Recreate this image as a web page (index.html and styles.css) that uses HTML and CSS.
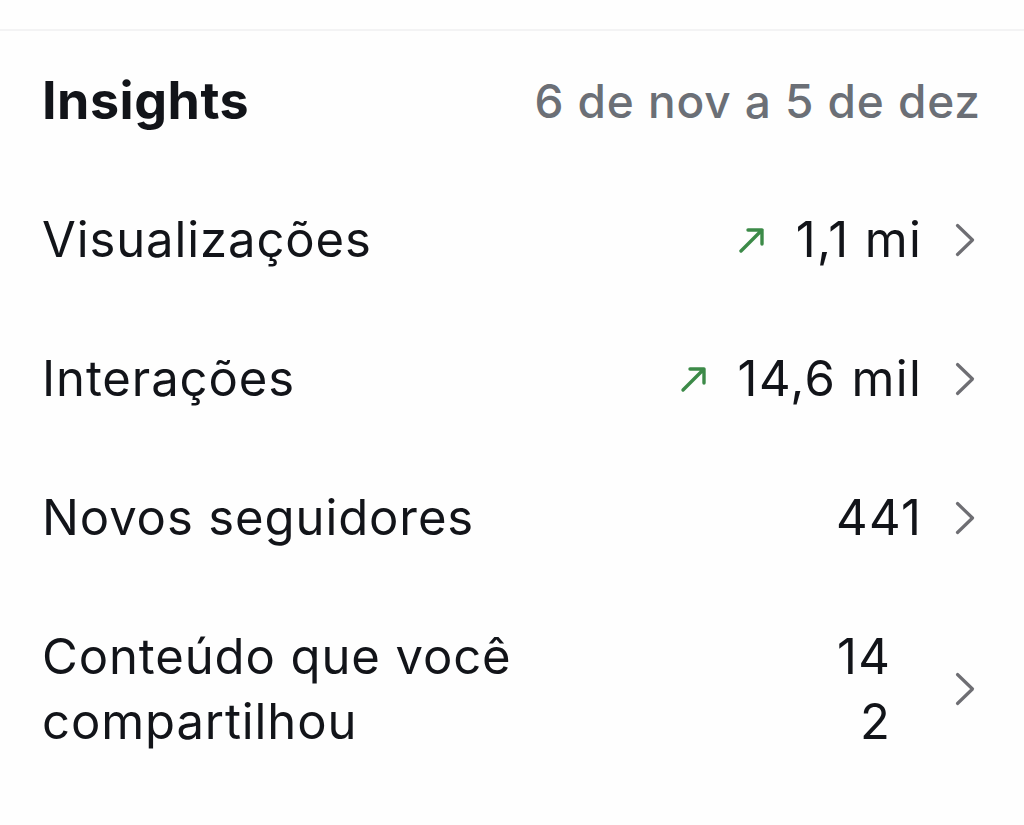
FILE: index.html
```html
<!DOCTYPE html>
<html lang="pt-BR">
<head>
<meta charset="utf-8">
<title>Insights</title>
<link rel="stylesheet" href="styles.css">
</head>
<body>
<div class="topbar"></div>
<section class="insights">
  <header class="header">
    <h1 class="title">Insights</h1>
    <span class="range">6 de nov a 5 de dez</span>
  </header>
  <div class="row">
    <span class="label">Visualizações</span>
    <span class="value">
      <svg class="trend" viewBox="0 0 28 28" width="28" height="28"><path d="M3 25 L24 4 M10 4 H24 V18" fill="none" stroke="#3c8a48" stroke-width="3.4" stroke-linecap="round" stroke-linejoin="round"/></svg>
      <span class="num">1,1 mi</span>
    </span>
    <svg class="chev" viewBox="0 0 20 34" width="20" height="34"><polyline points="2.5,2.5 17.5,17 2.5,31.5" fill="none" stroke="#6e6e73" stroke-width="3.2" stroke-linecap="round" stroke-linejoin="round"/></svg>
  </div>
  <div class="row">
    <span class="label">Interações</span>
    <span class="value">
      <svg class="trend" viewBox="0 0 28 28" width="28" height="28"><path d="M3 25 L24 4 M10 4 H24 V18" fill="none" stroke="#3c8a48" stroke-width="3.4" stroke-linecap="round" stroke-linejoin="round"/></svg>
      <span class="num">14,6 mil</span>
    </span>
    <svg class="chev" viewBox="0 0 20 34" width="20" height="34"><polyline points="2.5,2.5 17.5,17 2.5,31.5" fill="none" stroke="#6e6e73" stroke-width="3.2" stroke-linecap="round" stroke-linejoin="round"/></svg>
  </div>
  <div class="row">
    <span class="label">Novos seguidores</span>
    <span class="value">
      <span class="num">441</span>
    </span>
    <svg class="chev" viewBox="0 0 20 34" width="20" height="34"><polyline points="2.5,2.5 17.5,17 2.5,31.5" fill="none" stroke="#6e6e73" stroke-width="3.2" stroke-linecap="round" stroke-linejoin="round"/></svg>
  </div>
  <div class="row">
    <span class="label">Conteúdo que você<br>compartilhou</span>
    <span class="value value-stack">
      <span class="num">14</span>
      <span class="num">2</span>
    </span>
    <svg class="chev" viewBox="0 0 20 34" width="20" height="34"><polyline points="2.5,2.5 17.5,17 2.5,31.5" fill="none" stroke="#6e6e73" stroke-width="3.2" stroke-linecap="round" stroke-linejoin="round"/></svg>
  </div>
</section>
</body>
</html>
```
FILE: styles.css
```css
html, body {
  margin: 0;
  padding: 0;
  background: #fefefe;
}
body {
  font-family: Inter, "Noto Sans", "Liberation Sans", sans-serif;
  color: #121419;
}
.topbar {
  height: 29px;
  border-bottom: 2px solid #f3f3f4;
}
.insights {
  display: flex;
  flex-direction: column;
}
.header {
  height: 139px;
  display: flex;
  align-items: center;
  justify-content: space-between;
  padding: 0 43px 0 42px;
}
.title {
  margin: 0;
  font-size: 52px;
  font-weight: 700;
  letter-spacing: 0.5px;
  line-height: 60px;
}
.range {
  font-size: 46px;
  font-weight: 500;
  color: #6b6f76;
  line-height: 60px;
  letter-spacing: 0.9px;
}
.row {
  display: flex;
  align-items: center;
  padding: 37px 49px 37px 42px;
  font-size: 49px;
  line-height: 65px;
  letter-spacing: 0.9px;
}
.label {
  flex: 1;
}
.value {
  display: flex;
  align-items: center;
  gap: 30px;
  margin-right: 34px;
}
.num {
  letter-spacing: 1.4px;
  margin-right: -1.4px;
}
.value-stack {
  flex-direction: column;
  align-items: flex-end;
  gap: 0;
  margin-right: 65px;
}
.trend {
  display: block;
}
.chev {
  display: block;
}
```
